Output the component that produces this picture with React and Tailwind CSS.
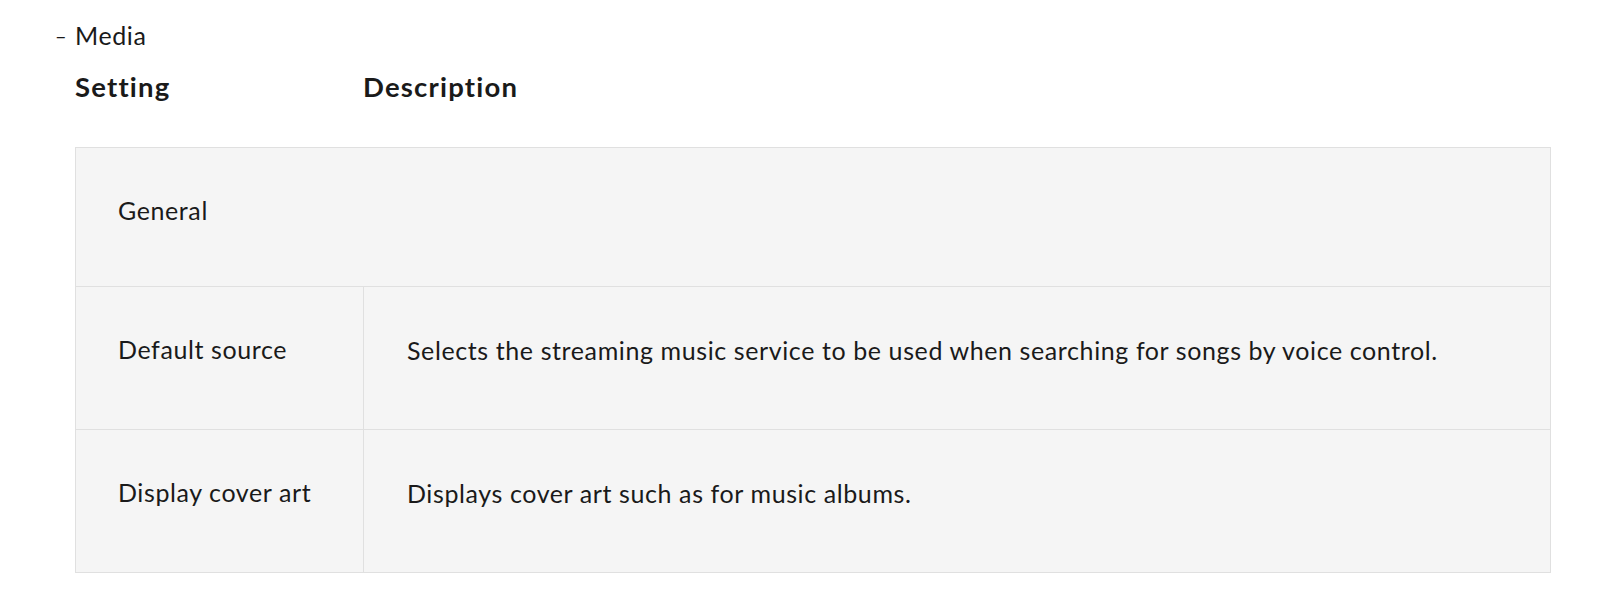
const rows = [
  {
    setting: "Default source",
    description:
      "Selects the streaming music service to be used when searching for songs by voice control.",
  },
  {
    setting: "Display cover art",
    description: "Displays cover art such as for music albums.",
  },
];

export default function App() {
  return (
    <div className="min-h-[594px] bg-white text-[#1a1a1a] font-['Lato',sans-serif] pt-[17px]">
      <div className="flex items-center h-[36px] text-[25px] leading-[36px] tracking-[0.6px]">
        <span className="w-[75px] pl-[55px] text-[20px]">–</span>
        <span>Media</span>
      </div>

      <div className="flex mt-[16px] h-[36px] pl-[75px] text-[27.5px] leading-[36px] font-bold tracking-[1.2px]">
        <div className="w-[288px]">Setting</div>
        <div>Description</div>
      </div>

      <div className="mt-[42px] ml-[75px] w-[1476px] border border-[#e0e0e0] bg-[#f5f5f5] text-[25px] leading-[36px] tracking-[0.6px]">
        <div className="h-[138px] pl-[42px] pt-[44px]">General</div>
        {rows.map((row) => (
          <div key={row.setting} className="flex h-[143px] border-t border-[#e0e0e0]">
            <div className="w-[288px] shrink-0 border-r border-[#e0e0e0] pl-[42px] pt-[44px]">
              {row.setting}
            </div>
            <div className="pl-[43px] pt-[45px]">{row.description}</div>
          </div>
        ))}
      </div>
    </div>
  );
}
